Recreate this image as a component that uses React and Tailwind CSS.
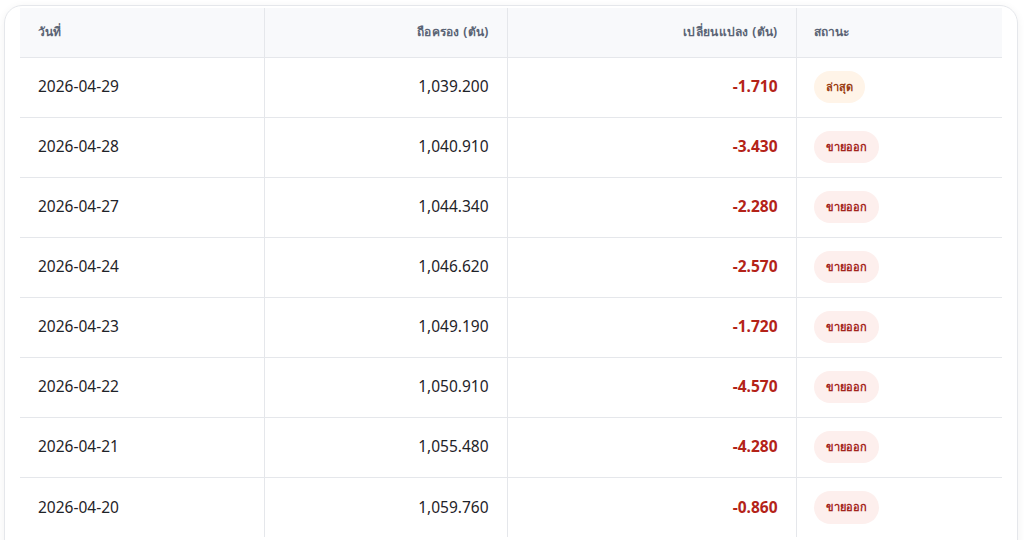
const rows = [
  ["2026-04-29", "1,039.200", "-1.710", "latest"],
  ["2026-04-28", "1,040.910", "-3.430"],
  ["2026-04-27", "1,044.340", "-2.280"],
  ["2026-04-24", "1,046.620", "-2.570"],
  ["2026-04-23", "1,049.190", "-1.720"],
  ["2026-04-22", "1,050.910", "-4.570"],
  ["2026-04-21", "1,055.480", "-4.280"],
  ["2026-04-20", "1,059.760", "-0.860"],
];

export default function App() {
  return (
    <div className="h-[540px] overflow-hidden bg-white pt-[5px] px-[4px]" style={{ fontFamily: '"Noto Sans", "DejaVu Sans", sans-serif' }}>
      <div className="rounded-tl-[18px] rounded-tr-[18px] border border-gray-200 shadow-[0_2px_8px_rgba(0,0,0,0.06)] px-[15px] pt-[2px] mr-[2px] pb-[20px]">
        <table className="w-full border-collapse table-fixed">
          <colgroup>
            <col className="w-[244px]" />
            <col className="w-[243px]" />
            <col className="w-[289px]" />
            <col />
          </colgroup>
          <thead>
            <tr className="bg-[#f8f9fb] h-[49px] text-[12px] font-bold text-[#5b6475]">
              <th className="text-left pl-[18px] border-r border-gray-200 font-bold">วันที่</th>
              <th className="text-right pr-[18px] border-r border-gray-200 font-bold tracking-wide">ถือครอง (ตัน)</th>
              <th className="text-right pr-[18px] border-r border-gray-200 font-bold tracking-wide">เปลี่ยนแปลง (ตัน)</th>
              <th className="text-left pl-[17px] font-bold">สถานะ</th>
            </tr>
          </thead>
          <tbody>
            {rows.map(([d, h, c, s]) => (
              <tr key={d} className="h-[60px] border-t border-gray-200 text-[15.5px] text-[#1f2328]">
                <td className="pl-[18px] border-r border-gray-200">{d}</td>
                <td className="text-right pr-[18px] border-r border-gray-200">{h}</td>
                <td className="text-right pr-[18px] border-r border-gray-200 font-bold text-[#b42318]">{c}</td>
                <td className="pl-[17px]">
                  {s ? (
                    <span className="inline-block rounded-full bg-[#fff4e8] text-[#9a3c12] text-[11px] font-bold px-[12px] py-[8px]">ล่าสุด</span>
                  ) : (
                    <span className="inline-block rounded-full bg-[#fdefed] text-[#a3261c] text-[11px] font-bold px-[12px] py-[8px]">ขายออก</span>
                  )}
                </td>
              </tr>
            ))}
          </tbody>
        </table>
      </div>
    </div>
  );
}
